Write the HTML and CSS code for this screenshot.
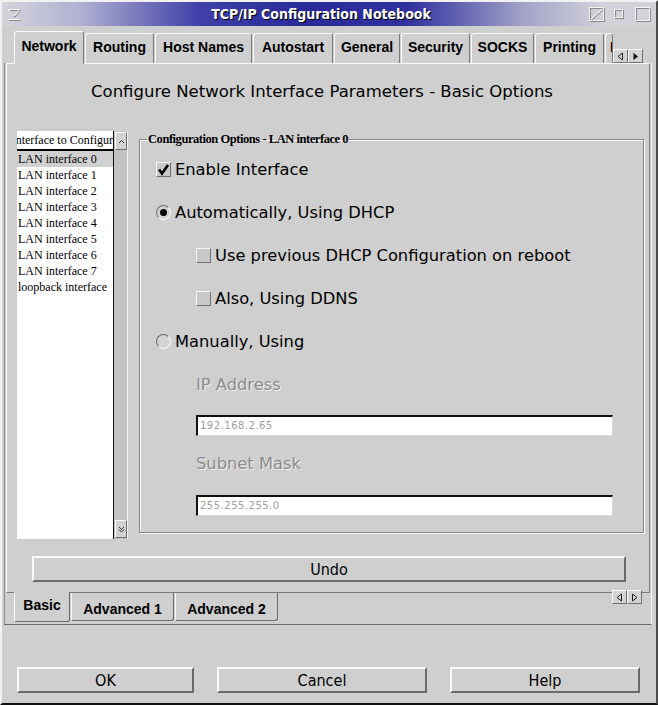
FILE: index.html
```html
<!DOCTYPE html>
<html lang="en">
<head>
  <meta charset="UTF-8" />
  <title>TCP/IP Configuration Notebook</title>
  <link rel="stylesheet" href="styles.css">
</head>
<body>
<div class="window">
  <div class="titlebar">
    <svg class="menu-icon" width="16" height="16" viewBox="0 0 16 16">
      <polygon points="2.5,3.5 13.5,3.5 8,10" fill="none" stroke="#8a8a8a"/>
      <polygon points="1.5,2.5 12.5,2.5 7,9" fill="none" stroke="#fafafa"/>
      <line x1="2" y1="13.5" x2="14" y2="13.5" stroke="#8a8a8a"/>
      <line x1="1" y1="12.5" x2="13" y2="12.5" stroke="#fafafa"/>
    </svg>
    <span class="title">TCP/IP Configuration Notebook</span>
    <div class="win-btns">
      <svg width="16" height="15" viewBox="0 0 16 15">
        <rect x="1.5" y="1.5" width="14" height="13" fill="none" stroke="#8a8a8a"/>
        <rect x="0.5" y="0.5" width="14" height="13" fill="none" stroke="#f4f4f4"/>
        <line x1="2" y1="12" x2="13" y2="2" stroke="#f4f4f4"/>
        <line x1="3" y1="13" x2="14" y2="3" stroke="#8a8a8a"/>
      </svg>
      <svg width="10" height="10" viewBox="0 0 10 10">
        <rect x="1.5" y="1.5" width="8" height="8" fill="none" stroke="#8a8a8a"/>
        <rect x="0.5" y="0.5" width="8" height="8" fill="none" stroke="#f4f4f4"/>
      </svg>
      <svg width="16" height="15" viewBox="0 0 16 15">
        <rect x="1.5" y="1.5" width="14" height="13" fill="none" stroke="#8a8a8a"/>
        <rect x="0.5" y="0.5" width="14" height="13" fill="none" stroke="#f4f4f4"/>
      </svg>
    </div>
  </div>

  <div class="notebook">
    <div class="tabs">
      <div class="tab active">Network</div>
      <div class="tab">Routing</div>
      <div class="tab">Host Names</div>
      <div class="tab">Autostart</div>
      <div class="tab">General</div>
      <div class="tab">Security</div>
      <div class="tab">SOCKS</div>
      <div class="tab">Printing</div>
      <div class="tab partial">Installation</div>
      <div class="arrows">
        <span class="arrow"><svg width="9" height="9" viewBox="0 0 9 9"><polygon points="6.5,1 2,4.5 6.5,8" fill="none" stroke="#222"/></svg></span>
        <span class="arrow"><svg width="9" height="9" viewBox="0 0 9 9"><polygon points="2.5,1 7,4.5 2.5,8" fill="#111"/></svg></span>
      </div>
    </div>

    <div class="frame">
      <div class="page">
        <h1 class="heading">Configure Network Interface Parameters - Basic Options</h1>

        <div class="content">
          <div class="listbox">
            <div class="list">
              <div class="list-head"><span>Interface to Configure</span></div>
              <div class="item selected">LAN interface 0</div>
              <div class="item">LAN interface 1</div>
              <div class="item">LAN interface 2</div>
              <div class="item">LAN interface 3</div>
              <div class="item">LAN interface 4</div>
              <div class="item">LAN interface 5</div>
              <div class="item">LAN interface 6</div>
              <div class="item">LAN interface 7</div>
              <div class="item">loopback interface</div>
            </div>
            <div class="scrollbar">
              <span class="sb-btn"><svg width="7" height="5" viewBox="0 0 7 5"><polyline points="1,4 3.5,1.5 6,4" fill="none" stroke="#333"/></svg></span>
              <span class="sb-btn"><svg width="7" height="7" viewBox="0 0 7 7"><polyline points="1,1 3.5,3.5 6,1" fill="none" stroke="#333"/><polyline points="1,3.5 3.5,6 6,3.5" fill="none" stroke="#333"/></svg></span>
            </div>
          </div>

          <fieldset class="group">
            <legend>Configuration Options - LAN interface 0</legend>

            <div class="opt">
              <span class="check"><svg width="13" height="12" viewBox="0 0 13 12"><polyline points="2,5.5 5,9.5 11,1" fill="none" stroke="#000" stroke-width="2.6"/></svg></span>
              Enable Interface
            </div>
            <div class="opt">
              <span class="radio on"></span>
              Automatically, Using DHCP
            </div>
            <div class="opt sub">
              <span class="check"></span>
              Use previous DHCP Configuration on reboot
            </div>
            <div class="opt sub">
              <span class="check"></span>
              Also, Using DDNS
            </div>
            <div class="opt">
              <span class="radio"></span>
              Manually, Using
            </div>
            <div class="opt sub disabled">IP Address</div>
            <div class="field">192.168.2.65</div>
            <div class="opt sub disabled">Subnet Mask</div>
            <div class="field">255.255.255.0</div>
          </fieldset>
        </div>

        <button class="btn undo">Undo</button>
      </div>

      <div class="subtabs">
        <div class="subtab active">Basic</div>
        <div class="subtab">Advanced 1</div>
        <div class="subtab">Advanced 2</div>
        <div class="arrows low">
          <span class="arrow"><svg width="9" height="9" viewBox="0 0 9 9"><polygon points="6.5,1 2,4.5 6.5,8" fill="none" stroke="#222"/></svg></span>
          <span class="arrow"><svg width="9" height="9" viewBox="0 0 9 9"><polygon points="2.5,1 7,4.5 2.5,8" fill="none" stroke="#222"/></svg></span>
        </div>
      </div>
    </div>
  </div>

  <div class="actions">
    <button class="btn ok">OK</button>
    <button class="btn cancel">Cancel</button>
    <button class="btn help">Help</button>
  </div>
</div>
</body>
</html>
```

FILE: styles.css
```css
* {
  box-sizing: border-box;
}

body {
  margin: 0;
  background: #cfcfcf;
  font-family: "DejaVu Sans", sans-serif;
  color: #000;
}

.window {
  width: 658px;
  height: 705px;
  background: #cfcfcf;
  border: 2px solid;
  border-color: #f2f2f2 #4c4c4c #111 #f2f2f2;
  display: flex;
  flex-direction: column;
}

/* title bar */
.titlebar {
  height: 24px;
  display: flex;
  align-items: center;
  padding: 0 5px 0 5px;
  background: linear-gradient(to right, #d4d4dc 0%, #b0b0d2 12%, #4040a8 30%, #2a2a9a 46%, #30309e 62%, #a4a4ca 80%, #d2d2da 92%);
}

.menu-icon {
  margin-top: 1px;
}

.title {
  flex: 1;
  text-align: center;
  color: #fff;
  font-family: "DejaVu Sans Condensed", "DejaVu Sans", sans-serif;
  font-stretch: condensed;
  font-weight: bold;
  font-size: 14px;
  text-shadow: 1px 1px 0 #000;
  padding-left: 30px;
}

.win-btns {
  display: flex;
  align-items: center;
  gap: 9px;
}

.win-btns svg:nth-child(2) {
  margin-right: 2px;
}

/* top tabs */
.notebook {
  margin: 2px 2px 0 2px;
}

.tabs {
  height: 35px;
  display: flex;
  align-items: flex-end;
  padding-left: 10px;
}

.tab {
  height: 30px;
  padding: 0 0 3px 0;
  display: flex;
  align-items: center;
  justify-content: center;
  font-family: "Liberation Sans", Arial, sans-serif;
  font-weight: bold;
  font-size: 14px;
  border: 1px solid;
  border-bottom: none;
  border-color: #fafafa #7a7a7a #7a7a7a #fafafa;
  border-radius: 3px 3px 0 0;
  margin-right: 1px;
  white-space: nowrap;
}

.tab:nth-child(1) { width: 70px; }
.tab:nth-child(2) { width: 69px; }
.tab:nth-child(3) { width: 97px; }
.tab:nth-child(4) { width: 80px; }
.tab:nth-child(5) { width: 66px; }
.tab:nth-child(6) { width: 69px; }
.tab:nth-child(7) { width: 63px; }
.tab:nth-child(8) { width: 69px; }

.tab.active {
  height: 33px;
  padding-bottom: 5px;
  margin-bottom: -1px;
  position: relative;
  background: #cfcfcf;
  z-index: 1;
}

.tab.partial {
  width: 8px;
  margin-right: 0;
  overflow: hidden;
  padding-left: 4px;
  justify-content: flex-start;
}

.arrows {
  display: flex;
  height: 14px;
}

.arrow {
  width: 15px;
  height: 14px;
  display: flex;
  align-items: center;
  justify-content: center;
  background: #d4d4d4;
  border: 1px solid;
  border-color: #fafafa #6e6e6e #6e6e6e #fafafa;
}

/* notebook page */
.frame {
  width: 648px;
  border-left: 1px solid #8a8a8a;
  border-right: 1px solid #f6f6f6;
  border-bottom: 1px solid #6a6a6a;
}

.page {
  height: 530px;
  margin: 0 1px;
  border: 1px solid;
  border-color: #fafafa #7a7a7a #7a7a7a #fafafa;
  display: flex;
  flex-direction: column;
}

.heading {
  margin: 18px 0 0 0;
  height: 20px;
  line-height: 20px;
  text-align: center;
  font-weight: normal;
  font-size: 16.5px;
  padding-right: 12px;
}

.content {
  display: flex;
  align-items: flex-start;
  margin-top: 29px;
  padding: 0 5px 0 10px;
}

/* list box */
.listbox {
  width: 111px;
  height: 408px;
  display: flex;
  background: #fff;
}

.list {
  width: 97px;
  border-right: 1px solid #111;
  overflow: hidden;
  font-family: "Liberation Serif", "Times New Roman", serif;
  font-size: 12px;
}

.list-head {
  height: 19px;
  margin-top: 1px;
  border-bottom: 2px solid #000;
  display: flex;
  justify-content: center;
  align-items: center;
  overflow: hidden;
  white-space: nowrap;
}

.list-head span {
  flex-shrink: 0;
}

.item {
  height: 16px;
  line-height: 16px;
  padding-left: 1px;
  white-space: nowrap;
}

.item.selected {
  background: #d0d0d0;
}

.scrollbar {
  width: 14px;
  background: #c2c2c2;
  border-right: 1px solid #f0f0f0;
  display: flex;
  flex-direction: column;
  justify-content: space-between;
  padding: 1px 0 1px 1px;
}

.sb-btn {
  height: 18px;
  display: flex;
  align-items: center;
  justify-content: center;
  background: #d2d2d2;
  border: 1px solid;
  border-color: #fafafa #6e6e6e #6e6e6e #fafafa;
}

/* options group */
.group {
  flex: 1;
  margin: 2px 0 0 11px;
  height: 400px;
  padding: 2px 0 0 16px;
  border: 1px solid #868686;
  box-shadow: inset 1px 1px 0 #fafafa, 1px 1px 0 #fafafa;
}

.group legend {
  font-family: "Liberation Serif", "Times New Roman", serif;
  font-weight: bold;
  font-size: 12.5px;
  letter-spacing: -0.45px;
  line-height: 13px;
  padding: 0 1px;
  margin-left: -9px;
}

.opt {
  height: 43px;
  display: flex;
  align-items: center;
  gap: 4px;
  font-size: 16.3px;
}

.opt.sub {
  padding-left: 40px;
}

.opt.disabled {
  color: #8c8c8c;
  text-shadow: 1px 1px 0 #f2f2f2;
}

.check {
  width: 15px;
  height: 15px;
  display: flex;
  align-items: center;
  justify-content: center;
  background: #c8c8c8;
  border: 1px solid;
  border-color: #f6f6f6 #6e6e6e #6e6e6e #f6f6f6;
}

.radio {
  width: 15px;
  height: 15px;
  border-radius: 50%;
  display: flex;
  align-items: center;
  justify-content: center;
  background: #d2d2d2;
  border: 1px solid;
  border-color: #6e6e6e #fafafa #fafafa #6e6e6e;
}

.radio.on::after {
  content: "";
  width: 7px;
  height: 7px;
  border-radius: 50%;
  background: #000;
}

.field {
  height: 21px;
  margin: 9px 30px 6px 40px;
  background: #fff;
  border-top: 2px solid #111;
  border-left: 2px solid #111;
  border-right: 1px solid #d8d8d8;
  border-bottom: 1px solid #d8d8d8;
  font-size: 10px;
  letter-spacing: 0.5px;
  color: #a0a0a0;
  padding-left: 2px;
  line-height: 17px;
}

.field:last-child {
  margin-top: 10px;
}

/* buttons */
.btn {
  height: 26px;
  background: #cfcfcf;
  border: 2px solid;
  border-color: #fafafa #6a6a6a #6a6a6a #fafafa;
  font-family: "DejaVu Sans Condensed", "DejaVu Sans", sans-serif;
  font-stretch: condensed;
  font-size: 16px;
  color: #000;
  padding: 0;
}

.undo {
  margin: 17px 23px 0 25px;
}

/* bottom tabs */
.subtabs {
  height: 31px;
  display: flex;
  align-items: flex-start;
  padding-left: 9px;
}

.subtab {
  height: 28px;
  padding-top: 4px;
  font-family: "Liberation Sans", Arial, sans-serif;
  font-weight: bold;
  font-size: 14px;
  border: 1px solid;
  border-top: none;
  border-color: #fafafa #6a6a6a #6a6a6a #fafafa;
  border-radius: 0 0 3px 3px;
  display: flex;
  align-items: center;
  justify-content: center;
  width: 103px;
  margin-right: 1px;
}

.subtab.active {
  width: 56px;
  height: 30px;
  margin-top: -1px;
  padding: 0 0 4px 0;
  background: #cfcfcf;
  position: relative;
}

.arrows.low {
  margin: -3px 9px 0 auto;
}

/* dialog buttons */
.actions {
  display: flex;
  justify-content: space-between;
  margin-top: 42px;
  padding: 0 16px 0 15px;
}

.ok {
  width: 177px;
}

.cancel {
  width: 210px;
}

.help {
  width: 190px;
}
```
